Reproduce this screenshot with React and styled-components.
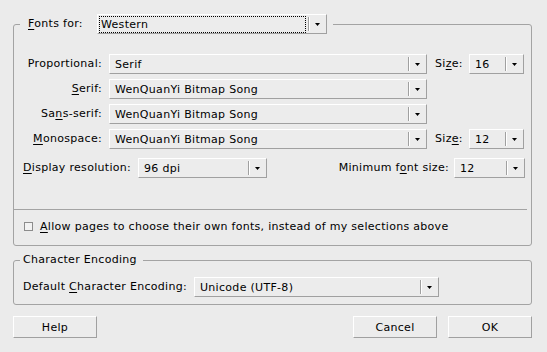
import React from 'react';
import styled, { createGlobalStyle } from 'styled-components';

const Global = createGlobalStyle`
  html, body { margin: 0; padding: 0; background: #ebebeb; }
  body {
    font-family: "DejaVu Sans", "Liberation Sans", sans-serif;
    font-size: 11px;
    letter-spacing: 0.3px;
    color: #000;
  }
  #root { width: 547px; height: 352px; }
`;

const Dialog = styled.div`
  box-sizing: border-box;
  width: 547px;
  height: 352px;
  padding: 14px 15px 0 13px;
  display: flex;
  flex-direction: column;
`;

const Group = styled.fieldset`
  margin: ${p => p.$mt || 0}px 0 0 0;
  border: 1px solid #a3a3a3;
  border-radius: 3px;
  padding: ${p => p.$pad};
  min-width: 0;
  display: flex;
  flex-direction: column;
`;

const Legend = styled.legend`
  margin-left: ${p => p.$ml}px;
  padding: 0 ${p => p.$pr}px 0 ${p => p.$pl}px;
  display: flex;
  align-items: center;
  gap: 7px;
  line-height: 14px;
`;

const Label = styled.span`
  display: inline-block;
  width: ${p => (p.$w ? `${p.$w}px` : 'auto')};
  text-align: ${p => (p.$right ? 'right' : 'left')};
  white-space: nowrap;
  line-height: 14px;
  flex-shrink: 0;
`;

const Key = styled.span`
  text-decoration: underline;
  text-underline-offset: 2px;
`;

const ComboBox = styled.div`
  box-sizing: border-box;
  width: ${p => p.$w}px;
  height: 20px;
  flex-shrink: 0;
  display: flex;
  background: #ececec;
  border-top: 1px solid #ffffff;
  border-left: 1px solid #ffffff;
  border-right: 1px solid #a0a0a0;
  border-bottom: 1px solid #a0a0a0;
`;

const ComboText = styled.div`
  flex: 1;
  display: flex;
  align-items: center;
  white-space: nowrap;
  overflow: hidden;
  padding-left: ${p => (p.$focus ? 1 : 5)}px;
  margin: ${p => (p.$focus ? '1px 2px 0 1px' : 0)};
  border: ${p => (p.$focus ? '1px dotted #000' : 'none')};
`;

const ComboSep = styled.div`
  width: 1px;
  margin: 2px 0;
  background: #a0a0a0;
  box-shadow: 1px 0 0 #ffffff;
`;

const ComboButton = styled.div`
  width: 17px;
  display: flex;
  align-items: center;
  justify-content: center;
`;

const Arrow = () => (
  <svg width="5" height="3" viewBox="0 0 5 3">
    <path d="M0 0H5L2.5 3Z" fill="#000" />
  </svg>
);

const Combo = ({ width, value, focus }) => (
  <ComboBox $w={width}>
    <ComboText $focus={focus}>{value}</ComboText>
    <ComboSep />
    <ComboButton>
      <Arrow />
    </ComboButton>
  </ComboBox>
);

const FontRows = styled.div`
  display: flex;
  flex-direction: column;
  gap: 5px;
`;

const Row = styled.div`
  display: flex;
  align-items: center;
  height: 20px;
  gap: ${p => p.$gap || 7}px;
  margin-top: ${p => p.$mt || 0}px;
`;

const SizeLabel = styled(Label)`
  margin-left: 1px;
`;

const Push = styled.div`
  display: flex;
  align-items: center;
  gap: 5px;
  margin-left: auto;
`;

const Separator = styled.div`
  height: 1px;
  background: #a3a3a3;
  margin: ${p => p.$mt}px -2px 0 -9px;
`;

const CheckRow = styled.label`
  display: flex;
  align-items: center;
  height: 16px;
  gap: 7px;
  margin-top: 8px;
  padding-left: 1px;
`;

const CheckBox = styled.span`
  box-sizing: border-box;
  width: 9px;
  height: 9px;
  border: 1px solid #8c8c8c;
  background: #f2f2f2;
  flex-shrink: 0;
`;

const ButtonRow = styled.div`
  display: flex;
  gap: 11px;
  margin-top: 11px;
`;

const Button = styled.button`
  box-sizing: border-box;
  width: 84px;
  height: 22px;
  margin: 0;
  margin-left: ${p => (p.$push ? 'auto' : '0')};
  padding: 0;
  font: inherit;
  letter-spacing: inherit;
  color: #000;
  background: #ececec;
  border-top: 1px solid #ffffff;
  border-left: 1px solid #ffffff;
  border-right: 1px solid #a0a0a0;
  border-bottom: 1px solid #a0a0a0;
  border-radius: 0;
`;

const fontRows = [
  { label: <>Proportional:</>, value: 'Serif', size: { key: 'z', value: '16' } },
  { label: <><Key>S</Key>erif:</>, value: 'WenQuanYi Bitmap Song' },
  { label: <>Sa<Key>n</Key>s-serif:</>, value: 'WenQuanYi Bitmap Song' },
  { label: <><Key>M</Key>onospace:</>, value: 'WenQuanYi Bitmap Song', size: { key: 'e', value: '12' } },
];

export default function App() {
  return (
    <>
      <Global />
      <Dialog>
        <Group $pad="20px 6px 11px 9px">
          <Legend $ml={-3} $pl={8} $pr={6}>
            <Label $w={62}><Key>F</Key>onts for:</Label>
            <Combo width={230} value="Western" focus />
          </Legend>
          <FontRows>
            {fontRows.map((r, i) => (
              <Row key={i}>
                <Label $w={79} $right>{r.label}</Label>
                <Combo width={318} value={r.value} />
                {r.size && (
                  <>
                    <SizeLabel $w={27}>
                      {r.size.key === 'z' ? <>Si<Key>z</Key>e:</> : <>Siz<Key>e</Key>:</>}
                    </SizeLabel>
                    <Combo width={55} value={r.size.value} />
                  </>
                )}
              </Row>
            ))}
          </FontRows>
          <Row $mt={9} $gap={6}>
            <Label $w={109}><Key>D</Key>isplay resolution:</Label>
            <Combo width={129} value="96 dpi" />
            <Push>
              <Label>Minimum f<Key>o</Key>nt size:</Label>
              <Combo width={71} value="12" />
            </Push>
          </Row>
          <Separator $mt={31} />
          <CheckRow>
            <CheckBox />
            <span><Key>A</Key>llow pages to choose their own fonts, instead of my selections above</span>
          </CheckRow>
        </Group>
        <Group $mt={7} $pad="10px 6px 7px 9px">
          <Legend $ml={-3} $pl={3} $pr={6}>Character Encoding</Legend>
          <Row $gap={6}>
            <Label $w={165}>Default <Key>C</Key>haracter Encoding:</Label>
            <Combo width={245} value="Unicode (UTF-8)" />
          </Row>
        </Group>
        <ButtonRow>
          <Button>Help</Button>
          <Button $push>Cancel</Button>
          <Button>OK</Button>
        </ButtonRow>
      </Dialog>
    </>
  );
}
